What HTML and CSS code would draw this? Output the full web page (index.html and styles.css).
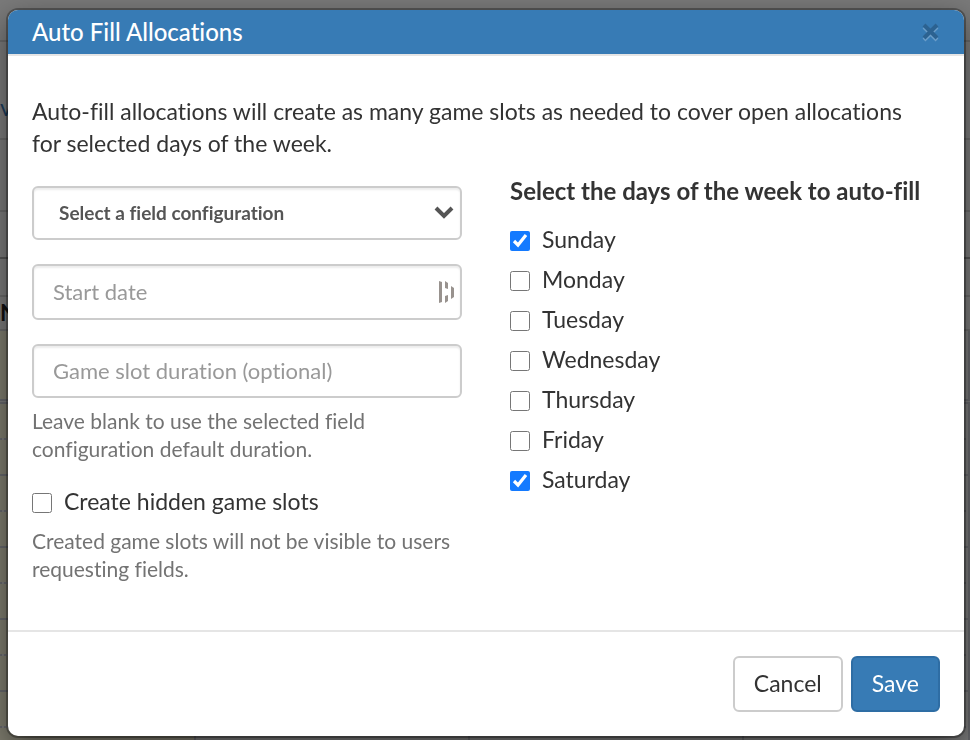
FILE: index.html
```html
<!DOCTYPE html>
<html lang="en">
<head>
  <meta charset="UTF-8">
  <meta name="viewport" content="width=device-width, initial-scale=1.0">
  <title>Auto Fill Allocations</title>
  <link rel="stylesheet" href="styles.css">
</head>
<body>
  <!-- Page behind the dialog -->
  <div class="page" aria-hidden="true">
    <div class="page-row nav"></div>
    <div class="page-row tabs">v</div>
    <div class="page-row toolbar"></div>
    <div class="page-row filters"></div>
    <div class="page-row spacer"></div>
    <div class="page-row days">N</div>
    <div class="slots all-day"><div></div><div></div><div></div><div></div></div>
    <div class="slots half"><div></div><div></div><div></div><div></div></div>
    <div class="slots"><div></div><div></div><div></div><div></div></div>
    <div class="slots half"><div></div><div></div><div></div><div></div></div>
    <div class="slots"><div></div><div></div><div></div><div></div></div>
    <div class="slots half"><div></div><div></div><div></div><div></div></div>
    <div class="slots"><div></div><div></div><div></div><div></div></div>
    <div class="slots half"><div></div><div></div><div></div><div></div></div>
    <div class="slots"><div></div><div></div><div></div><div></div></div>
    <div class="slots half"><div></div><div></div><div></div><div></div></div>
    <div class="slots"><div></div><div></div><div></div><div></div></div>
  </div>

  <div class="modal">
    <form class="modal-content" role="dialog" aria-labelledby="modal-title">
      <header class="modal-header">
        <h1 id="modal-title">Auto Fill Allocations</h1>
        <button type="button" class="close" aria-label="Close">
          <svg width="20" height="20" viewBox="0 0 20 20">
            <path class="close-shadow" d="M4 5l13 13M17 5L4 18"/>
            <path class="close-mark" d="M4 3l13 13M17 3L4 16"/>
          </svg>
        </button>
      </header>

      <div class="modal-body">
        <p class="intro">Auto-fill allocations will create as many game slots as needed to cover open allocations for selected days of the week.</p>
        <div class="columns">
          <div class="fields">
            <div class="control">
              <select class="form-control" id="field-config" aria-label="Field configuration">
                <option>Select a field configuration</option>
              </select>
              <svg class="chevron" width="20" height="14" viewBox="0 0 20 14">
                <path d="M2 2l8 8 8-8"/>
              </svg>
            </div>
            <div class="control">
              <input type="text" class="form-control tall" id="start-date" placeholder="Start date" aria-label="Start date">
              <svg class="autofill" width="18" height="22" viewBox="0 0 18 22">
                <path d="M1 0l3 1v20l-3 1zM7 0l3 2v6l-3-1zM7 15l3-1v6l-3 2zM13 5l3 2v9l-3 2z"/>
              </svg>
            </div>
            <div class="control">
              <input type="text" class="form-control" id="duration" placeholder="Game slot duration (optional)" aria-label="Game slot duration (optional)" aria-describedby="duration-help">
            </div>
            <p class="help" id="duration-help">Leave blank to use the selected field configuration default duration.</p>
            <label class="check hidden-slots"><input type="checkbox" aria-describedby="hidden-help"> Create hidden game slots</label>
            <p class="help" id="hidden-help">Created game slots will not be visible to users requesting fields.</p>
          </div>

          <fieldset class="days-list">
            <legend>Select the days of the week to auto-fill</legend>
            <label class="check"><input type="checkbox" checked> Sunday</label>
            <label class="check"><input type="checkbox"> Monday</label>
            <label class="check"><input type="checkbox"> Tuesday</label>
            <label class="check"><input type="checkbox"> Wednesday</label>
            <label class="check"><input type="checkbox"> Thursday</label>
            <label class="check"><input type="checkbox"> Friday</label>
            <label class="check"><input type="checkbox" checked> Saturday</label>
          </fieldset>
        </div>
      </div>

      <footer class="modal-footer">
        <button type="button" class="btn">Cancel</button>
        <button type="submit" class="btn btn-primary">Save</button>
      </footer>
    </form>
  </div>
</body>
</html>
```

FILE: styles.css
```css
* {
  box-sizing: border-box;
}
body {
  margin: 0;
  height: 100vh;
  overflow: hidden;
  font-family: Lato, sans-serif;
  font-size: 23px;
  line-height: 32px;
  color: #333;
  background-color: #7a7a7a;
  font-variant-ligatures: none;
}

/* Dimmed page */
.page-row {
  border-bottom: 2px solid #696969;
}
.nav {
  height: 42px;
}
.tabs {
  height: 98px;
  padding-top: 49px;
  color: #1c3d5c;
}
.toolbar {
  height: 72px;
}
.filters {
  height: 47px;
  border-color: #555;
}
.spacer {
  height: 38px;
}
.days {
  height: 34px;
  font-weight: bold;
  line-height: 30px;
  color: #111;
}
.slots {
  display: grid;
  grid-template-columns: 196px 274px 274px 1fr;
  height: 36px;
  border-bottom: 2px solid #66676b;
}
.slots div {
  border-right: 2px solid #66676b;
}
.slots div:first-child {
  background-color: #7e7c6e;
}
.all-day {
  height: 73px;
  border-bottom: 5px double #66676b;
}
.half {
  border-bottom-style: dotted;
}

/* Modal */
.modal {
  position: fixed;
  inset: 0;
  padding: 10px 6px 4px 8px;
}
.modal-content {
  background-color: #fff;
  border-radius: 10px;
  box-shadow: 0 0 0 2px rgba(0, 0, 0, 0.3), 0 10px 30px rgba(0, 0, 0, 0.5);
}
.modal-header {
  display: flex;
  align-items: center;
  justify-content: space-between;
  padding: 6px 24px;
  background-color: #377bb5;
  border-bottom: 2px solid #e5e5e5;
  border-radius: 10px 10px 0 0;
  color: #fff;
}
.modal-header h1 {
  margin: 0;
  font-size: 24px;
  font-weight: 500;
}
.close {
  display: flex;
  padding: 0;
  border: none;
  background: none;
  cursor: pointer;
}
.close path {
  fill: none;
  stroke-width: 4;
}
.close-shadow {
  stroke: #6a9dc9;
}
.close-mark {
  stroke: #2c6291;
}
.modal-body {
  padding: 39px 24px 47px;
}
.intro {
  margin: 0 0 16px;
  padding-right: 12px;
}
.columns {
  display: grid;
  grid-template-columns: 1fr 1fr;
  gap: 48px;
}
.fields {
  padding-top: 11px;
}
.control {
  position: relative;
  margin-bottom: 24px;
}
.form-control {
  display: block;
  width: 100%;
  height: 54px;
  padding: 0 19px 2px;
  border: 2px solid #ccc;
  border-radius: 6px;
  background-color: #fff;
  box-shadow: inset 0 2px 2px rgba(0, 0, 0, 0.08);
  font-family: inherit;
  font-size: 22px;
  font-variant-ligatures: none;
  color: #555;
}
.form-control::placeholder {
  color: #999;
}
.tall {
  height: 56px;
}
select.form-control {
  padding: 0 25px 2px;
  appearance: none;
  font-size: 19px;
  font-weight: bold;
}
.chevron {
  position: absolute;
  top: 20px;
  right: 8px;
  fill: none;
  stroke: #555;
  stroke-width: 4;
  pointer-events: none;
}
.autofill {
  position: absolute;
  top: 17px;
  right: 6px;
  fill: #98928e;
}
.help {
  margin: 0;
  font-size: 21px;
  line-height: 28px;
  color: #737373;
}
.control + .help {
  margin-top: -15px;
}
.check {
  display: flex;
  align-items: center;
  gap: 12px;
  height: 40px;
}
.check input {
  width: 20px;
  height: 20px;
  margin: 3px 0 0;
  accent-color: #147aff;
}
.hidden-slots {
  margin: 18px 0 6px;
}
.days-list {
  margin: 0;
  padding: 0;
  border: none;
}
.days-list legend {
  padding: 0;
  margin-bottom: 12px;
  font-size: 24px;
  font-weight: bold;
}
.modal-footer {
  display: flex;
  justify-content: flex-end;
  gap: 8px;
  padding: 24px;
  border-top: 2px solid #e5e5e5;
}
.btn {
  height: 56px;
  padding: 0 19px 2px;
  border: 2px solid #ccc;
  border-radius: 6px;
  background-color: #fff;
  font-family: inherit;
  font-size: 23px;
  color: #333;
  cursor: pointer;
}
.btn-primary {
  border-color: #2e6da4;
  background-color: #377bb5;
  color: #fff;
}
```
